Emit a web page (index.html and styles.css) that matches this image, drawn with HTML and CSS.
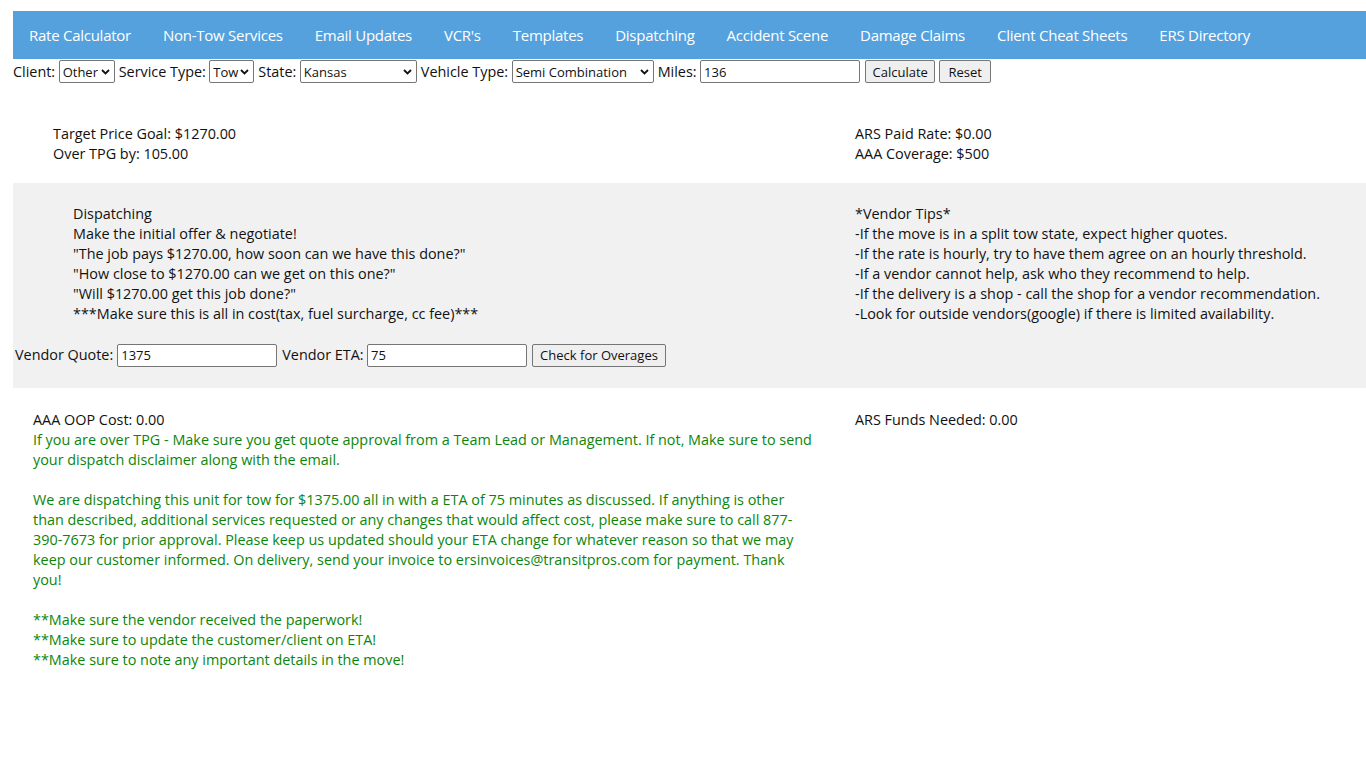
FILE: index.html
```html
<!DOCTYPE html>
<html>
<head>
<meta charset="utf-8">
<title>Rate Calculator</title>
<link rel="stylesheet" href="styles.css">
</head>
<body>
<div class="page">
  <nav class="nav">
    <a>Rate Calculator</a>
    <a>Non-Tow Services</a>
    <a>Email Updates</a>
    <a>VCR's</a>
    <a>Templates</a>
    <a>Dispatching</a>
    <a>Accident Scene</a>
    <a>Damage Claims</a>
    <a>Client Cheat Sheets</a>
    <a>ERS Directory</a>
  </nav>
  <form class="calc">
    <label>Client:</label>
    <select class="sel-client"><option>Other</option></select>
    <label>Service Type:</label>
    <select class="sel-service"><option>Tow</option></select>
    <label>State:</label>
    <select class="sel-state"><option>Kansas</option></select>
    <label>Vehicle Type:</label>
    <select class="sel-vehicle"><option>Semi Combination</option></select>
    <label>Miles:</label>
    <input class="inp-miles" type="text" value="136">
    <button type="button" class="btn btn-calc">Calculate</button>
    <button type="button" class="btn btn-reset">Reset</button>
  </form>

  <section class="row top">
    <div class="left">
      <div>Target Price Goal: $1270.00</div>
      <div>Over TPG by: 105.00</div>
    </div>
    <div class="right">
      <div>ARS Paid Rate: $0.00</div>
      <div>AAA Coverage: $500</div>
    </div>
  </section>

  <section class="gray">
    <div class="row mid">
      <div class="left">
        <div>Dispatching</div>
        <div>Make the initial offer &amp; negotiate!</div>
        <div>"The job pays $1270.00, how soon can we have this done?"</div>
        <div>"How close to $1270.00 can we get on this one?"</div>
        <div>"Will $1270.00 get this job done?"</div>
        <div>***Make sure this is all in cost(tax, fuel surcharge, cc fee)***</div>
      </div>
      <div class="right">
        <div>*Vendor Tips*</div>
        <div>-If the move is in a split tow state, expect higher quotes.</div>
        <div>-If the rate is hourly, try to have them agree on an hourly threshold.</div>
        <div>-If a vendor cannot help, ask who they recommend to help.</div>
        <div>-If the delivery is a shop - call the shop for a vendor recommendation.</div>
        <div>-Look for outside vendors(google) if there is limited availability.</div>
      </div>
    </div>
    <div class="vendor">
      <label>Vendor Quote:</label>
      <input class="inp-vendor" type="text" value="1375">
      <label>Vendor ETA:</label>
      <input class="inp-vendor" type="text" value="75">
      <button type="button" class="btn">Check for Overages</button>
    </div>
  </section>

  <section class="row bottom">
    <div class="left">
      <div>AAA OOP Cost: 0.00</div>
      <p class="green">If you are over TPG - Make sure you get quote approval from a Team Lead or Management. If not, Make sure to send your dispatch disclaimer along with the email.</p>
      <p class="green gap">We are dispatching this unit for tow for $1375.00 all in with a ETA of 75 minutes as discussed. If anything is other than described, additional services requested or any changes that would affect cost, please make sure to call 877-390-7673 for prior approval. Please keep us updated should your ETA change for whatever reason so that we may keep our customer informed. On delivery, send your invoice to ersinvoices@transitpros.com for payment. Thank you!</p>
      <p class="green gap">**Make sure the vendor received the paperwork!<br>**Make sure to update the customer/client on ETA!<br>**Make sure to note any important details in the move!</p>
    </div>
    <div class="right">
      <div>ARS Funds Needed: 0.00</div>
    </div>
  </section>
</div>
</body>
</html>
```

FILE: styles.css
```css
* { box-sizing: border-box; }
html, body { margin: 0; padding: 0; background: #fff; }
body {
  font-family: "Open Sans", "Liberation Sans", sans-serif;
  font-size: 14.4px;
  line-height: 20px;
  color: #111;
}
.page { padding: 11px 0 0 13px; }

.nav {
  display: flex;
  background: #55a1dd;
  height: 48px;
  align-items: center;
}
.nav a {
  color: #fff;
  font-size: 15px;
  padding: 0 16px;
  white-space: nowrap;
  letter-spacing: -0.26px;
}

.calc {
  display: flex;
  align-items: center;
  height: 25px;
  margin: 0;
}
.calc label, .vendor label { margin-right: 3.5px; }
select, input, button {
  font-family: "Open Sans", "Liberation Sans", sans-serif;
  font-size: 13px;
  color: #111;
  margin: 0 4px 0 0;
}
select {
  -webkit-appearance: none;
  appearance: none;
  height: 23px;
  border: 1px solid #767676;
  border-radius: 2px;
  background-color: #fff;
  background-image: url("data:image/svg+xml,%3Csvg xmlns='http://www.w3.org/2000/svg' width='9' height='6' viewBox='0 0 9 6'%3E%3Cpath d='M1 1l3.5 3.5L8 1' fill='none' stroke='%23111' stroke-width='1.8'/%3E%3C/svg%3E");
  background-repeat: no-repeat;
  background-position: right 4px center;
  background-size: 9px 6px;
  padding: 0 14px 0 3px;
}
.sel-client { width: 56px; }
.sel-service { width: 45px; }
.sel-state { width: 117px; }
.sel-vehicle { width: 142px; }
input {
  height: 23px;
  border: 1px solid #767676;
  border-radius: 2px;
  padding: 0 3px;
  background: #fff;
}
.inp-miles { width: 160px; margin-right: 5px; }
.btn {
  height: 23px;
  background: #efefef;
  border: 1px solid #767676;
  border-radius: 2px;
  padding: 0 7px;
}
.btn-calc { padding: 0 6.5px; }
.btn-reset { padding: 0 8px; }

.row {
  display: grid;
  grid-template-columns: 842px 1fr;
}
.top { padding: 40px 0 19px; }
.top .left { padding-left: 40px; }

.gray { background: #f1f1f1; padding: 21px 0 22px; }
.mid .left { padding-left: 60px; }
.vendor {
  display: flex;
  align-items: center;
  padding-left: 2px;
  margin-top: 20px;
  height: 22px;
}
.vendor label:first-child { margin-right: 4px; }
.inp-vendor { width: 160px; height: 23px; margin-right: 5px; }

.bottom { padding-top: 22px; }
.bottom .left { padding-left: 20px; padding-right: 38.5px; }
.green { color: #0b860b; margin: 0; }
.gap { margin-top: 20px; }
```
